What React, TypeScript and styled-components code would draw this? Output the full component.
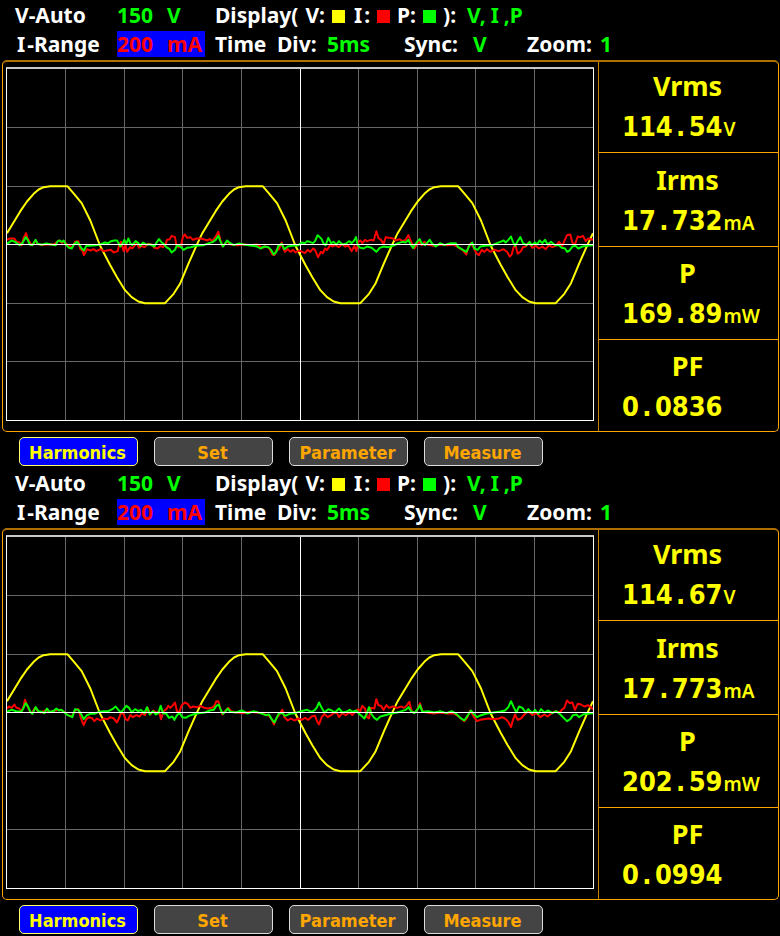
import React from "react";
import styled, { createGlobalStyle } from "styled-components";

const GlobalStyle = createGlobalStyle`
  * { box-sizing: border-box; }
  body { margin: 0; background: #000; }
`;

const LABEL_FONT = `"Noto Sans", "Open Sans", sans-serif`;
const DIGIT_FONT = `"DejaVu Sans Condensed", "DejaVu Sans", sans-serif`;
const ORANGE = "#ffa500";

const Page = styled.main`
  display: flex;
  flex-direction: column;
  background: #000;
`;

const Panel = styled.section`
  display: flex;
  flex-direction: column;
`;

const Header = styled.header`
  display: grid;
  grid-template-columns: 102px 98px 1fr;
  grid-auto-rows: 29px;
  height: 60px;
  padding: 1px 0 0 15px;
  font: 700 21px/29px ${LABEL_FONT};
  color: #fff;
  white-space: pre;
`;

const Reading = styled.span`
  color: #00ff00;
`;

const Quantity = styled(Reading)`
  display: flex;
  gap: 14px;
`;

const RangeQuantity = styled(Quantity)`
  justify-self: start;
  width: 88px;
  height: 26px;
  margin-top: 1px;
  line-height: 27px;
  background: #0000ff;
  color: #ff0000;
`;

const WideI = styled.span<{ $pad: number }>`
  padding: 0 ${(p) => p.$pad}px;
`;

const Legend = styled.div`
  display: flex;
  align-items: center;
  gap: 7px;
`;

const ShownTraces = styled(Reading)`
  padding-left: 4px;
`;

const Swatch = styled.i<{ $color: string }>`
  width: 13px;
  height: 13px;
  margin-top: 2px;
  background: ${(p) => p.$color};
`;

const Timing = styled.div`
  display: grid;
  grid-template-columns: 62px 50px 77px 69px 54px 73px auto;
  justify-content: start;
`;

const Frame = styled.div`
  display: grid;
  grid-template-columns: 1fr 180px;
  margin: 0 1px 0 2px;
  border: 1px solid ${ORANGE};
  border-top: 2px solid #b07000;
  border-radius: 5px;
`;

const Scope = styled.div`
  padding: 5px 4px 10px 3px;
`;

const Plot = styled.svg`
  display: block;
  width: 100%;
  height: 354px;
  border: 1px solid #fff;
  border-top: 2px solid #c8c8c8;

  path {
    fill: none;
    vector-effect: non-scaling-stroke;
  }
`;

const GridLine = styled.path<{ $axis?: boolean }>`
  stroke: ${(p) => (p.$axis ? "#ffffff" : "#666666")};
  stroke-width: 1px;
  shape-rendering: crispEdges;
`;

const Trace = styled.path<{ $color: string }>`
  stroke: ${(p) => p.$color};
  stroke-width: 2px;
  stroke-linejoin: round;
`;

const Metrics = styled.dl`
  display: grid;
  grid-template-rows: 91px 94px 93px 1fr;
  margin: 0;
  border-left: 1px solid #c98200;
  color: #ffff00;
`;

const Metric = styled.div`
  display: flex;
  flex-direction: column;
  justify-content: flex-end;
  padding-bottom: 4px;
  border-bottom: 1px solid ${ORANGE};

  &:last-child {
    padding-bottom: 3px;
    border-bottom: 0;
  }
`;

const MetricName = styled.dt`
  padding-right: 2px;
  text-align: center;
  font: 700 27px/40px ${LABEL_FONT};
`;

const MetricValue = styled.dd`
  margin: 0;
  padding-left: 23px;
  font: 700 27px/42px ${DIGIT_FONT};
  white-space: nowrap;
`;

const Point = styled.span`
  display: inline-block;
  width: 16px;
  text-align: center;
`;

const Unit = styled.span`
  margin-left: 1px;
  font: 600 19px/20px ${LABEL_FONT};
`;

const Keys = styled.nav`
  display: flex;
  gap: 16px;
  height: 36px;
  padding: 5px 0 2px 19px;
`;

const Key = styled.button<{ $active: boolean }>`
  width: 119px;
  height: 29px;
  padding: 2px 2px 0 0;
  border: 1px solid ${(p) => (p.$active ? "#ffff66" : "#dcdcdc")};
  border-radius: 5px;
  background: ${(p) => (p.$active ? "#0000ff" : "#444444")};
  color: ${(p) => (p.$active ? "#ffff00" : ORANGE)};
  font: 700 18px/25px ${DIGIT_FONT};
`;

type Sample = [number, number];

/* The plot is drawn in a 1758 x 1053 space, three units to the pixel. */
const W = 1758;
const H = 1053;
const PERIOD = 586;

const cycle: Sample[] = [
  [0, -34], [20, -67], [40, -100], [60, -129], [80, -152], [95, -165], [110, -172], [130, -175],
  [181, -175], [201, -152], [224, -124], [250, -72], [279, 3], [309, 61], [330, 98], [354, 137],
  [374, 158], [394, 171], [414, 176], [474, 176], [500, 148], [520, 116], [545, 56], [568, 4],
];

const voltage: Sample[] = [0, 1, 2]
  .flatMap((n) => cycle.map(([x, y]): Sample => [x + n * PERIOD, y]))
  .concat([[W, -34]]);

const toPath = (points: Sample[]) =>
  points.map(([x, y], i) => `${i ? "L" : "M"}${x} ${y + H / 2}`).join("");

/* Noise samples are written as "x,y" with y measured from the zero axis. */
const parse = (text: string): Sample[] =>
  text.trim().split(/\s+/).map((p) => p.split(",").map(Number) as Sample);

const current1 = parse(`
0,-14 8,-18 22,-18 28,-8 38,-6 44,2 50,-20 57,-34 62,-18 70,-4 76,2 86,-12 92,-2 104,2 120,-1 140,0
156,-12 164,-5 172,-8 182,2 196,8 204,-8 214,-10 220,14 226,18 231,32 240,14 250,18 260,14 268,20
280,14 290,20 300,18 312,16 320,24 332,20 337,0 342,-8 350,20 355,0 360,22 370,8 376,12 384,2 390,-4
396,10 404,4 412,8 424,-2 434,0 442,10 452,12 460,4 468,8 476,-2 480,-14 488,-16 494,-26 504,-22
508,2 514,8 522,4 528,-24 534,-30 540,-20 550,-22 558,-14 568,-18 580,-18 590,-16 600,-12 608,-16
616,-10 626,-24 634,-38 640,-14 646,4 652,0 660,-10 670,0 690,2 710,0 730,2 750,0 766,10 776,6 786,10
796,30 802,32 808,18 816,14 824,-6 828,10 834,22 842,14 850,22 858,16 866,24 876,18 886,22 894,26
902,16 910,22 918,12 924,16 933,38 942,22 948,26 954,12 960,16 970,2 976,6 984,2 996,8 1006,-2
1014,6 1024,4 1034,20 1042,4 1048,20 1054,-8 1060,-12 1066,-4 1074,-14 1080,-10 1092,-14 1100,-12
1108,-40 1114,-20 1122,-14 1130,-2 1136,-22 1146,-20 1158,-18 1166,-12 1178,-16 1186,-10 1196,-14
1204,-28 1210,-14 1222,12 1228,2 1236,-10 1244,2 1252,-8 1262,0 1280,4 1300,0 1320,2 1340,0
1356,10 1366,16 1378,30 1384,8 1392,-4 1400,10 1408,26 1416,32 1424,16 1432,22 1440,14 1450,22
1462,16 1476,20 1490,14 1500,22 1508,36 1514,30 1520,8 1526,4 1532,28 1542,20 1548,8 1556,6 1566,-6
1576,10 1586,4 1596,12 1606,6 1616,14 1626,2 1636,8 1646,4 1656,-8 1666,4 1672,-10 1680,-28 1690,-30
1696,-6 1704,0 1712,-24 1720,-22 1728,-26 1736,-10 1744,-18 1758,-14`);

const power1 = parse(`
0,-2 14,-12 24,-8 32,-2 38,2 46,-4 56,-22 62,-14 68,0 76,2 86,-14 92,-2 104,1 118,-3 132,0 146,2
152,-10 158,-12 164,-8 170,-12 178,2 186,10 194,12 202,-2 210,-8 218,2 224,12 231,18 238,4 250,4
266,2 280,0 294,-6 304,-4 312,-10 322,-12 330,-12 336,-2 340,6 346,-2 352,-14 358,-2 364,-18 370,-4
376,2 386,-10 394,-4 400,4 408,-6 418,0 430,0 442,6 450,-8 456,-16 464,-6 470,-2 478,8 488,14 494,24
504,16 510,2 520,6 530,16 540,10 552,8 566,4 590,2 606,-4 618,-8 626,-14 634,-26 640,-10 648,6
654,-2 660,-12 670,-4 680,2 696,-3 710,0 730,3 750,6 760,12 772,6 784,8 792,16 800,30 808,22 814,4
824,-2 832,14 842,6 856,4 874,2 884,-6 894,-4 900,-10 908,-8 918,-4 924,-10 932,-28 944,-16 950,-2
956,2 964,-20 972,-4 980,-8 988,0 996,-10 1006,0 1016,-2 1026,-10 1034,-4 1040,-10 1047,-22
1052,2 1060,10 1070,12 1080,6 1094,10 1108,22 1118,10 1130,6 1144,8 1160,3 1174,-4 1186,-8 1196,-6
1204,-14 1210,-2 1218,10 1226,-2 1232,-10 1238,-16 1244,-4 1254,2 1268,-14 1276,-2 1286,6 1300,-4
1312,2 1330,-4 1346,-4 1354,8 1364,14 1378,22 1388,2 1396,-6 1402,12 1412,16 1420,6 1434,4 1456,2
1470,-4 1480,-8 1490,-12 1496,-6 1504,-14 1512,-24 1518,-8 1524,4 1532,-10 1540,-22 1548,-4 1558,2
1568,-8 1574,2 1584,-6 1590,0 1598,-12 1606,-4 1614,-14 1622,0 1632,-8 1644,2 1656,2 1664,10 1674,12
1680,22 1688,18 1696,6 1706,4 1714,12 1726,6 1740,4 1758,2`);

const current2 = parse(`
0,-12 6,-18 14,-14 22,-24 28,-14 36,-12 44,-4 50,-20 54,-38 60,-22 68,-4 74,2 84,-14 92,-4 102,0
118,-8 126,-1 144,-6 160,-8 172,-2 182,8 194,12 204,-6 214,-10 222,18 230,38 238,20 246,14 256,18
262,26 270,18 280,24 290,18 302,20 310,14 320,18 330,30 338,12 342,0 350,6 356,20 362,24 370,8
378,14 388,8 398,12 406,2 414,8 422,-14 430,6 440,-6 448,2 456,-4 462,20 470,-4 478,-10 484,-20
490,-14 498,-22 504,-30 510,-4 516,2 524,-22 534,-30 542,-26 550,-14 558,-18 570,-16 580,-20 592,-14
602,-12 614,-14 622,-20 628,-34 634,-34 640,-12 646,6 656,-6 664,-14 672,-4 690,0 710,2 730,-2 750,0
770,4 786,10 794,20 801,36 808,18 814,10 826,-8 832,14 842,24 852,18 862,24 874,18 884,22 894,16
904,22 914,12 924,10 930,26 936,36 944,14 952,4 962,14 972,8 984,0 990,2 996,14 1006,2 1016,8 1028,0
1036,8 1044,-2 1054,-10 1060,-4 1066,-20 1074,-12 1080,14 1086,18 1092,-14 1102,-12 1108,-40 1114,-22
1122,-20 1130,-8 1138,-22 1146,-14 1158,-18 1170,-14 1182,-18 1192,-14 1200,-22 1207,-32 1214,-4
1222,2 1232,-10 1239,-28 1246,-4 1260,0 1280,3 1300,0 1320,3 1340,2 1352,10 1362,18 1372,26 1380,16
1390,-6 1400,12 1410,26 1420,22 1430,20 1444,18 1460,20 1476,18 1486,14 1496,20 1504,28 1512,44
1518,22 1524,6 1532,22 1542,18 1552,6 1564,-4 1576,8 1588,2 1600,14 1612,6 1622,12 1634,2 1646,-4
1658,0 1664,-8 1672,-14 1680,-36 1688,-28 1696,-30 1704,-8 1712,-26 1722,-24 1732,-18 1744,-22
1758,-10`);

const power2 = parse(`
0,-3 14,-8 28,-4 42,-2 48,-10 56,-28 62,-20 70,-2 76,4 86,-16 94,-4 104,-2 112,2 120,-12 128,-1
142,-6 148,-12 156,-6 164,-8 172,0 182,8 196,14 204,-10 214,-8 222,4 230,20 240,8 250,4 262,4 276,-2
290,-4 304,-4 316,-10 326,-18 334,-8 342,0 350,-10 358,-20 366,-14 374,0 384,-10 394,-4 402,-8
412,2 420,-16 428,6 438,-4 446,6 454,2 461,-20 468,2 478,4 486,16 496,12 502,22 510,8 518,2 526,14
536,16 546,10 558,6 574,2 594,0 608,-6 620,-8 628,-20 635,-24 642,-6 648,4 656,-4 662,-12 670,-2
686,0 704,-6 722,3 740,-4 760,2 776,8 786,6 794,20 802,30 810,14 816,2 826,2 834,10 848,4 864,2
882,-4 900,-8 914,-2 924,-8 930,-16 936,-30 944,-14 952,0 964,-10 974,-6 984,0 996,-12 1006,0 1018,-2
1028,-8 1036,-2 1048,-6 1056,4 1064,10 1072,18 1080,2 1086,-16 1094,6 1102,16 1110,22 1120,12
1134,8 1150,4 1170,0 1184,-4 1196,-8 1205,-16 1212,-4 1222,2 1232,-10 1239,-22 1246,-2 1264,-4
1282,0 1300,-4 1318,2 1334,-4 1348,4 1360,16 1372,24 1380,12 1392,-6 1400,4 1410,14 1422,8 1436,4
1460,0 1480,-3 1494,-6 1504,-16 1512,-34 1520,-16 1528,0 1536,-18 1546,-14 1556,0 1564,-10 1576,2
1584,-8 1594,4 1602,-10 1612,0 1624,-6 1636,2 1648,-4 1660,6 1670,16 1680,26 1690,20 1698,8 1708,6
1716,14 1728,6 1742,4 1758,2`);

const columns = [1, 2, 3, 4, 6, 7, 8, 9].map((i) => `M${(W / 10) * i} 0V${H}`).join("");
const rows = [1, 2, 4, 5].map((i) => `M0 ${(H / 6) * i}H${W}`).join("");

interface MetricData {
  name: string;
  value: string;
  unit?: string;
}

interface ScreenData {
  current: Sample[];
  power: Sample[];
  metrics: MetricData[];
}

const screens: ScreenData[] = [
  {
    current: current1,
    power: power1,
    metrics: [
      { name: "Vrms", value: "114.54", unit: "V" },
      { name: "Irms", value: "17.732", unit: "mA" },
      { name: "P", value: "169.89", unit: "mW" },
      { name: "PF", value: "0.0836" },
    ],
  },
  {
    current: current2,
    power: power2,
    metrics: [
      { name: "Vrms", value: "114.67", unit: "V" },
      { name: "Irms", value: "17.773", unit: "mA" },
      { name: "P", value: "202.59", unit: "mW" },
      { name: "PF", value: "0.0994" },
    ],
  },
];

const keys = ["Harmonics", "Set", "Parameter", "Measure"];

/* The decimal point takes a full digit cell, as on a segment display. */
function Digits({ value }: { value: string }) {
  const [whole, fraction] = value.split(".");
  return (
    <>
      {whole}
      <Point>.</Point>
      {fraction}
    </>
  );
}

function Screen({ current, power, metrics }: ScreenData) {
  return (
    <Panel>
      <Header>
        <span>V-Auto</span>
        <Quantity>
          <span>150</span>
          <span>V</span>
        </Quantity>
        <Legend>
          <span>Display(</span>
          <span>V:</span>
          <Swatch $color="#ffff00" />
          <span>
            <WideI $pad={2}>I</WideI>:
          </span>
          <Swatch $color="#ff0000" />
          <span>P:</span>
          <Swatch $color="#00ff00" />
          <span>):</span>
          <ShownTraces>
            V,<WideI $pad={5}>I</WideI>,P
          </ShownTraces>
        </Legend>
        <span>
          <WideI $pad={2}>I</WideI>-Range
        </span>
        <RangeQuantity>
          <span>200</span>
          <span>mA</span>
        </RangeQuantity>
        <Timing>
          <span>Time</span>
          <span>Div:</span>
          <Reading>5ms</Reading>
          <span>Sync:</span>
          <Reading>V</Reading>
          <span>Zoom:</span>
          <Reading>1</Reading>
        </Timing>
      </Header>
      <Frame>
        <Scope>
          <Plot
            viewBox={`0 0 ${W} ${H}`}
            preserveAspectRatio="none"
            role="img"
            aria-label="Voltage, current and power waveforms"
          >
            <GridLine d={columns + rows} />
            <GridLine $axis d={`M${W / 2} 0V${H}`} />
            <Trace $color="#ffff00" d={toPath(voltage)} />
            <Trace $color="#ff0000" d={toPath(current)} />
            <Trace $color="#00ff00" d={toPath(power)} />
            <GridLine $axis d={`M0 ${H / 2}H${W}`} />
          </Plot>
        </Scope>
        <Metrics>
          {metrics.map((m) => (
            <Metric key={m.name}>
              <MetricName>{m.name}</MetricName>
              <MetricValue>
                <Digits value={m.value} />
                {m.unit && <Unit>{m.unit}</Unit>}
              </MetricValue>
            </Metric>
          ))}
        </Metrics>
      </Frame>
      <Keys>
        {keys.map((k, i) => (
          <Key key={k} type="button" $active={i === 0}>
            {k}
          </Key>
        ))}
      </Keys>
    </Panel>
  );
}

export default function App() {
  return (
    <Page>
      <GlobalStyle />
      {screens.map((s, i) => (
        <Screen key={i} {...s} />
      ))}
    </Page>
  );
}
